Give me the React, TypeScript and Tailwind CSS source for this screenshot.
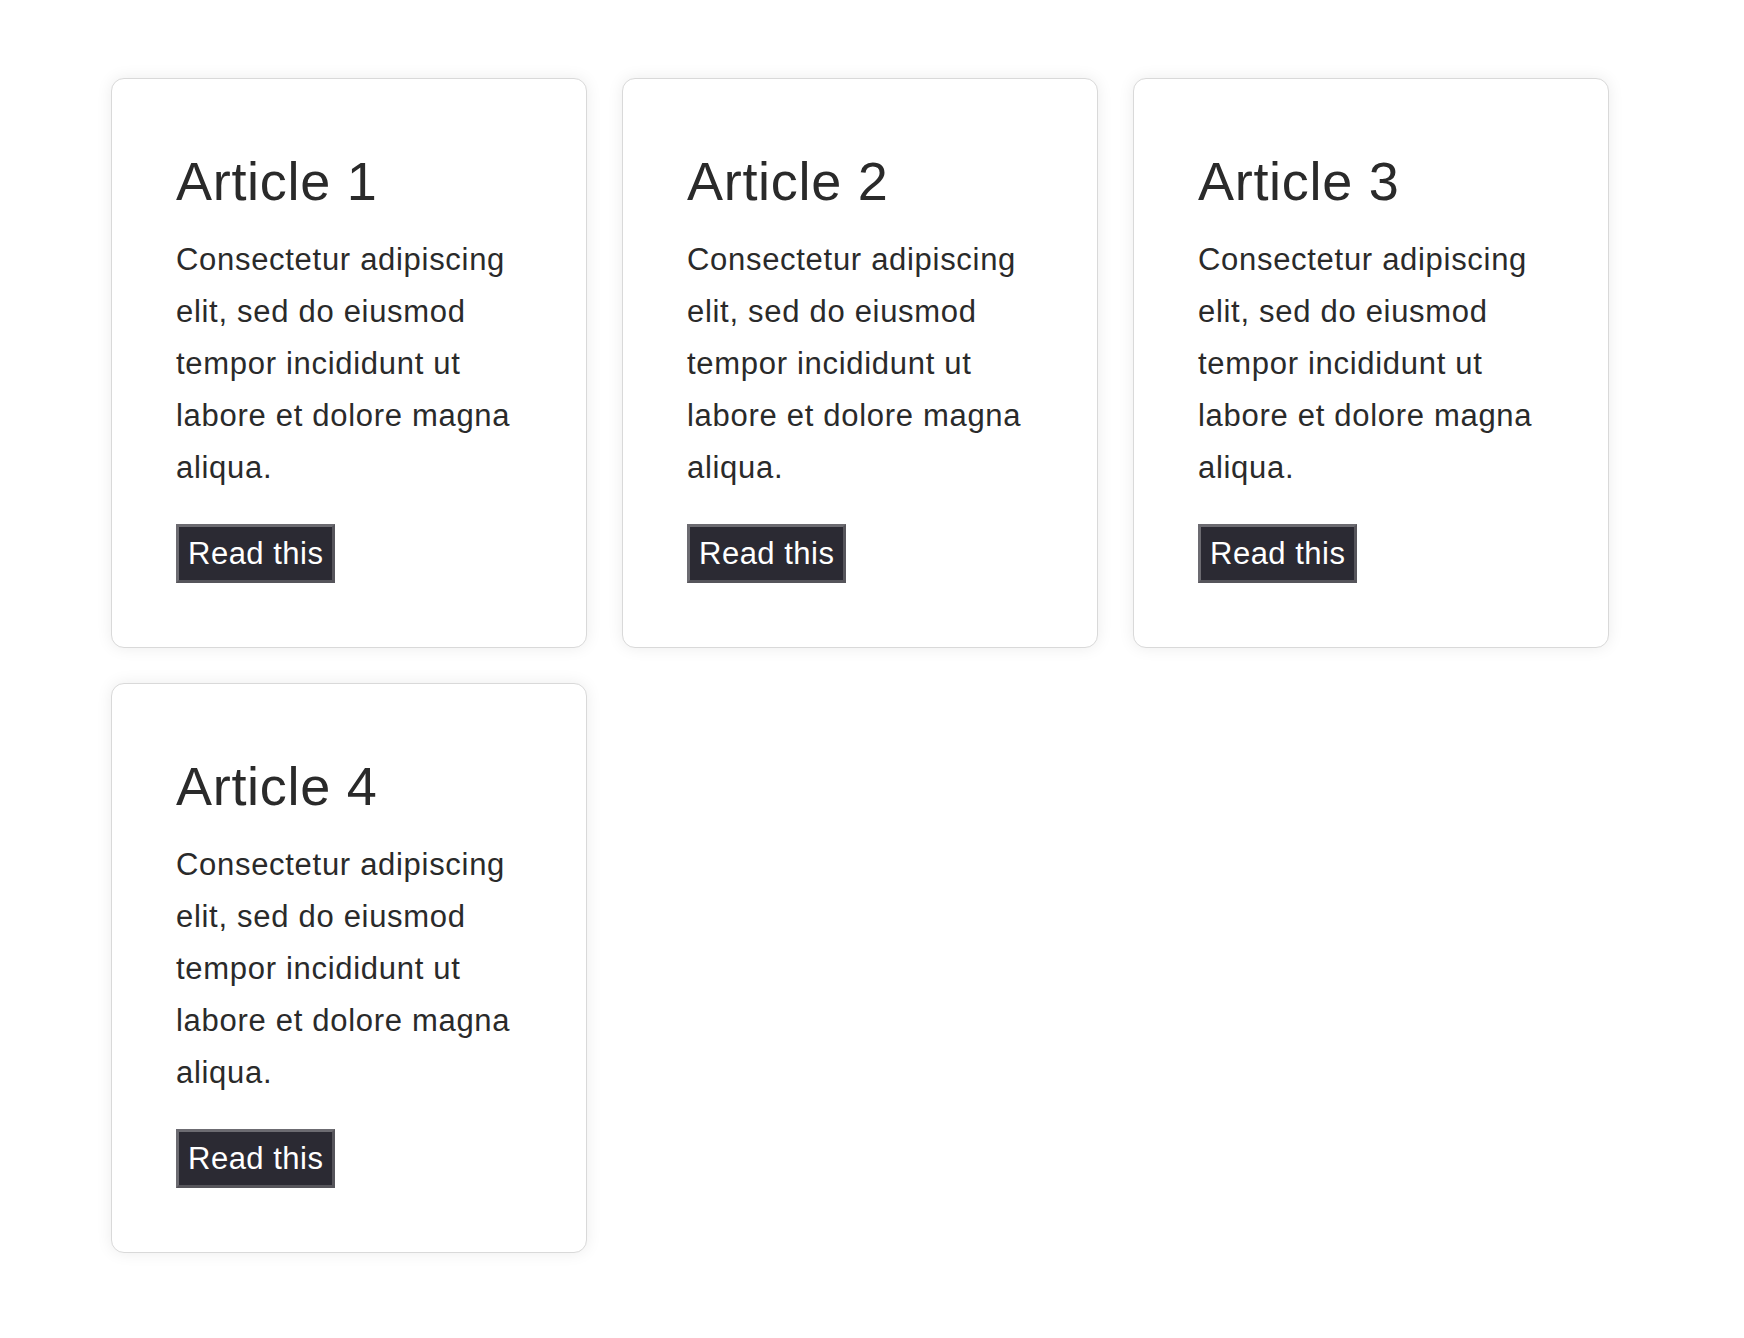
const articles = [1, 2, 3, 4].map((n) => ({
  id: n,
  title: `Article ${n}`,
  body: 'Consectetur adipiscing elit, sed do eiusmod tempor incididunt ut labore et dolore magna aliqua.',
}));

function ArticleCard({ title, body }: { title: string; body: string }) {
  return (
    <div className="rounded-[13px] border border-[#d9d9d9] bg-white pt-[70px] pb-[64px] px-[64px] shadow-[0_0_16px_rgba(0,0,0,0.08)]">
      <h2 className="text-[54px] leading-[64px] font-normal tracking-[0.7px] text-[#2a2a2a]">{title}</h2>
      <p className="mt-[21px] text-[31px] leading-[52px] tracking-[0.7px] text-[#2a2a2a]">{body}</p>
      <button className="mt-[30px] border-[3px] border-t-[#6c6b71] border-l-[#6c6b71] border-r-[#56555b] border-b-[#56555b] bg-[#2b2a33] px-[9px] py-[8px] text-[31px] leading-[37px] tracking-[0.5px] text-white">
        Read this
      </button>
    </div>
  );
}

export default function App() {
  return (
    <div className="min-h-screen bg-white pt-[78px] pl-[111px] font-['Liberation_Sans',Arial,sans-serif]">
      <div className="grid grid-cols-[repeat(3,476px)] gap-[35px]">
        {articles.map((a) => (
          <ArticleCard key={a.id} title={a.title} body={a.body} />
        ))}
      </div>
    </div>
  );
}
